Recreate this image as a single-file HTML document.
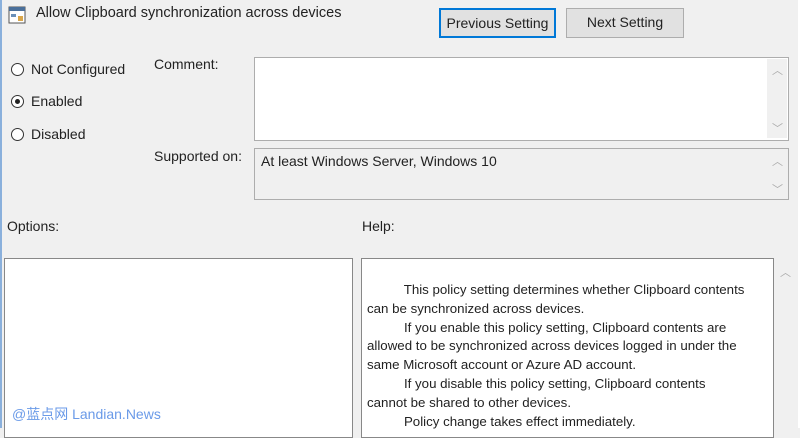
<!DOCTYPE html>
<html><head><style>
body{margin:0;width:800px;height:428px;background:#f0f0f0;position:relative;overflow:hidden;font-family:"Liberation Sans",sans-serif;font-size:13.5px;color:#222}
.a{position:absolute}
.box{position:absolute;background:#fff;border:1px solid #adadad;box-sizing:border-box}
.btn{position:absolute;background:#e1e1e1;border:1px solid #adadad;box-sizing:border-box;text-align:center;line-height:27px;font-size:14px}
.r{position:absolute;width:13px;height:13px;border:1px solid #333;border-radius:50%;box-sizing:border-box;background:#fff}
.sb{position:absolute;color:#aaa;font-size:11px}
</style></head><body>
<div class="a" style="left:0;top:0;width:2px;height:428px;background:#8ab0dc"></div>
<svg class="a" style="left:8px;top:6px" width="18" height="18"><rect x="1" y="1" width="16" height="16" fill="#fff" stroke="#555"/><rect x="1" y="1" width="16" height="4" fill="#4a6f9a"/><rect x="3" y="8" width="5" height="3" fill="#6a8fb8"/><rect x="10" y="10" width="5" height="5" fill="#d9a64a"/></svg>
<div class="a" style="left:36px;top:5px;font-size:14.5px">Allow Clipboard synchronization across devices</div>
<div class="btn" style="left:439px;top:8px;width:117px;height:30px;border:2px solid #0078d7;line-height:26px">Previous Setting</div>
<div class="btn" style="left:566px;top:8px;width:118px;height:30px">Next Setting</div>
<div class="r" style="left:11px;top:63px"></div><div class="a" style="left:31px;top:61px;font-size:14px">Not Configured</div>
<div class="r" style="left:11px;top:95px"></div><div class="a" style="left:15px;top:99px;width:5px;height:5px;border-radius:50%;background:#222"></div><div class="a" style="left:31px;top:93px;font-size:14px">Enabled</div>
<div class="r" style="left:11px;top:128px"></div><div class="a" style="left:31px;top:126px;font-size:14px">Disabled</div>
<div class="a" style="left:154px;top:56px;font-size:14px">Comment:</div>
<div class="box" style="left:254px;top:57px;width:535px;height:84px"></div>
<div class="a" style="left:767px;top:59px;width:20px;height:79px;background:#f0f0f0"></div>
<div class="sb" style="left:772px;top:62px">︿</div><div class="sb" style="left:772px;top:120px">﹀</div>
<div class="a" style="left:154px;top:148px;font-size:14px">Supported on:</div>
<div class="box" style="left:254px;top:148px;width:535px;height:52px;background:#f0f0f0"></div>
<div class="a" style="left:261px;top:153px;font-size:14px">At least Windows Server, Windows 10</div>
<div class="sb" style="left:772px;top:153px">︿</div><div class="sb" style="left:772px;top:181px">﹀</div>
<div class="a" style="left:7px;top:218px;font-size:14px">Options:</div>
<div class="a" style="left:362px;top:218px;font-size:14px">Help:</div>
<div class="box" style="left:4px;top:258px;width:349px;height:180px;border-color:#888"></div>
<div class="box" style="left:361px;top:258px;width:413px;height:180px;border-color:#888"></div>
<div class="sb" style="left:780px;top:264px">︿</div>
<div class="a" style="left:798px;top:0;width:2px;height:428px;background:#fff"></div>
<div class="a" style="left:367px;top:281px;line-height:18.8px;font-size:13.3px;white-space:pre">          This policy setting determines whether Clipboard contents
can be synchronized across devices.
          If you enable this policy setting, Clipboard contents are
allowed to be synchronized across devices logged in under the
same Microsoft account or Azure AD account.
          If you disable this policy setting, Clipboard contents
cannot be shared to other devices.
          Policy change takes effect immediately.</div>
<div class="a" style="left:12px;top:404px;color:#6a9ae8;font-size:14px;font-family:'Liberation Sans','Noto Sans CJK SC',sans-serif">@蓝点网 Landian.News</div>
</body></html>
